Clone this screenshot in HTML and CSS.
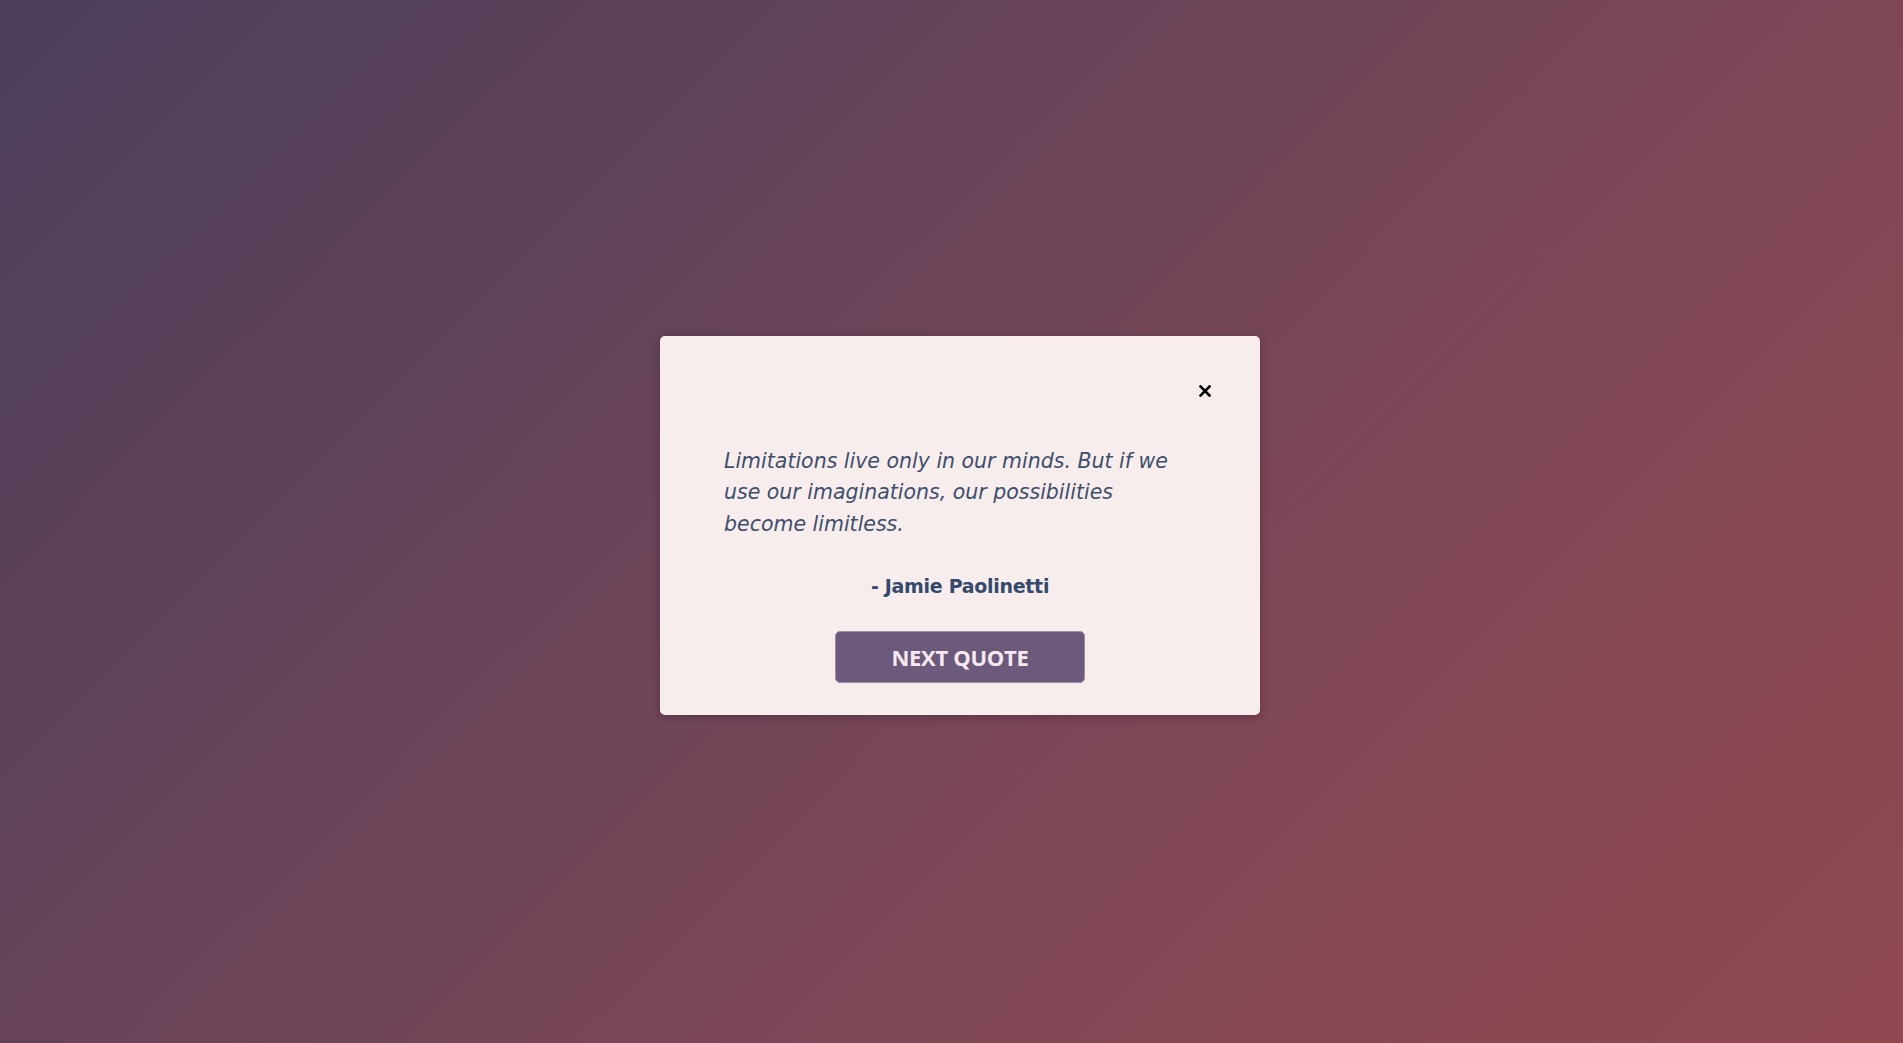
FILE: index.html
```html
<!DOCTYPE html>
<html lang="en">
<head>
<meta charset="utf-8">
<title>Quote</title>
<link rel="stylesheet" href="styles.css">
</head>
<body>
<main class="page">
  <section class="card">
    <div class="card-head">
      <button class="close" aria-label="Close">
        <svg width="12" height="12" viewBox="0 0 12 12"><path d="M1.5 1.5 L10.5 10.5 M10.5 1.5 L1.5 10.5" stroke="#000" stroke-width="2.6" stroke-linecap="square"/></svg>
      </button>
    </div>
    <p class="quote">Limitations live only in our minds. But if we use our imaginations, our possibilities become limitless.</p>
    <p class="author">- Jamie Paolinetti</p>
    <button class="next">NEXT QUOTE</button>
  </section>
</main>
</body>
</html>
```

FILE: styles.css
```css
html, body {
  margin: 0;
  height: 100%;
}
body {
  background: linear-gradient(135deg, #4b3f5b 0%, #6a4458 40%, #7f4756 65%, #914951 100%);
  font-family: "Open Sans", sans-serif;
}
.page {
  height: 100%;
  box-sizing: border-box;
  padding-left: 17px;
  display: flex;
  align-items: center;
  justify-content: center;
}
.card {
  width: 600px;
  box-sizing: border-box;
  background: #f7eded;
  border-radius: 5px;
  box-shadow: 0 2px 10px rgba(40, 20, 40, 0.35);
  padding: 48px 64px 32px;
  display: flex;
  flex-direction: column;
  margin-top: 8px;
}
.card-head {
  display: flex;
  justify-content: flex-end;
  height: 14px;
  margin-right: -16px;
}
.close {
  border: 0;
  background: none;
  padding: 0;
  width: 14px;
  height: 14px;
  display: flex;
  align-items: center;
  justify-content: center;
  cursor: pointer;
}
.quote {
  margin: 48px 0 0;
  max-width: 450px;
  font-family: "DejaVu Sans", sans-serif;
  font-style: italic;
  font-size: 20.5px;
  line-height: 31.5px;
  color: #3e4e6c;
}
.author {
  margin: 32px 0 0;
  text-align: center;
  font-family: "DejaVu Sans", sans-serif;
  font-weight: 700;
  font-size: 19px;
  line-height: 28px;
  color: #34496b;
  letter-spacing: -0.3px;
}
.next {
  align-self: center;
  margin-top: 31px;
  width: 250px;
  height: 52px;
  background: #6b5a7b;
  border: 1px solid #9a8ea6;
  border-radius: 5px;
  color: #f8e9f0;
  font-family: "Open Sans", sans-serif;
  font-weight: 700;
  font-size: 22px;
  letter-spacing: -0.3px;
  cursor: pointer;
}
```
